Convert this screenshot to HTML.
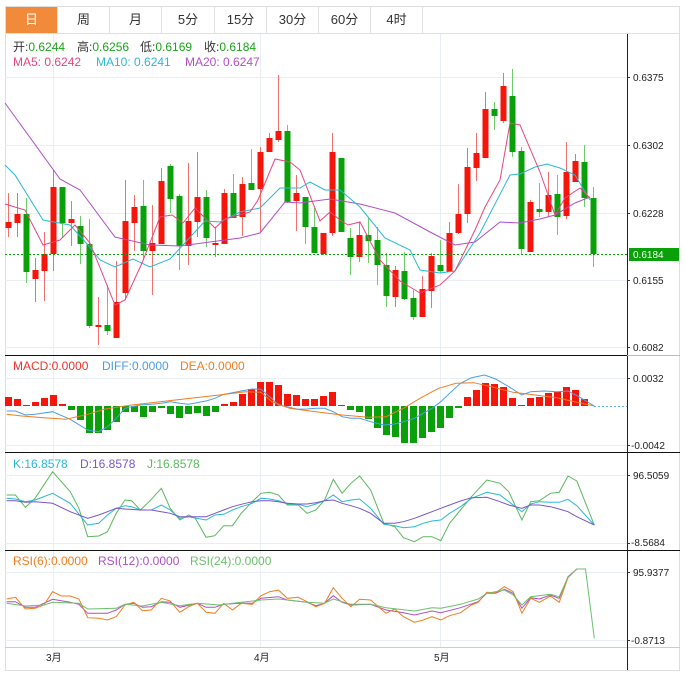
<!DOCTYPE html>
<html><head><meta charset="utf-8"><style>
body{margin:0;background:#fff;width:685px;height:680px;overflow:hidden;font-family:"Liberation Sans","Noto Sans CJK SC",sans-serif}
svg{position:absolute;left:0;top:0}
.tab{position:absolute;top:7px;height:26px;line-height:26px;text-align:center;font-size:13px;color:#333;border-right:1px solid #e0e0e0}
</style></head><body>
<svg id="s" width="685" height="680" xmlns="http://www.w3.org/2000/svg" font-family="Liberation Sans, Noto Sans CJK SC, sans-serif">
<rect x="5.5" y="6.5" width="674" height="664" fill="none" stroke="#dedede"/>
<line x1="5" y1="33.5" x2="680" y2="33.5" stroke="#e0e0e0"/>
<g id="grid" stroke="#e8eef3" stroke-width="1"></g>
<g id="draw"></g>
<line x1="5" y1="355.5" x2="627" y2="355.5" stroke="#111"/>
<line x1="5" y1="452.5" x2="680" y2="452.5" stroke="#111"/>
<line x1="5" y1="550.5" x2="680" y2="550.5" stroke="#111"/>
<line x1="5" y1="647.5" x2="680" y2="647.5" stroke="#ccc"/>
<line x1="627.5" y1="34" x2="627.5" y2="670" stroke="#222"/>
<line x1="627" y1="355.5" x2="680" y2="355.5" stroke="#bbb"/>
<g font-size="12">
<text y="51" fill="#333"><tspan x="13">开:</tspan><tspan fill="#1aa31a">0.6244</tspan><tspan x="77">高:</tspan><tspan fill="#1aa31a">0.6256</tspan><tspan x="140">低:</tspan><tspan fill="#1aa31a">0.6169</tspan><tspan x="204">收:</tspan><tspan fill="#1aa31a">0.6184</tspan></text>
<text y="66"><tspan x="13" fill="#e8467c">MA5: 0.6242</tspan><tspan x="96" fill="#2bb8d6">MA10: 0.6241</tspan><tspan x="185" fill="#b04fc8">MA20: 0.6247</tspan></text>
<text y="370"><tspan x="13" fill="#f0322a">MACD:0.0000</tspan><tspan x="102" fill="#4a9ee8">DIFF:0.0000</tspan><tspan x="180" fill="#f07d20">DEA:0.0000</tspan></text>
<text y="468"><tspan x="13" fill="#2bb8d6">K:16.8578</tspan><tspan x="80" fill="#7b55c8">D:16.8578</tspan><tspan x="147" fill="#5cb85c">J:16.8578</tspan></text>
<text y="565"><tspan x="13" fill="#f07d20">RSI(6):0.0000</tspan><tspan x="98" fill="#b04fc8">RSI(12):0.0000</tspan><tspan x="190" fill="#6cc06c">RSI(24):0.0000</tspan></text>
</g>
<rect x="629" y="248" width="50" height="13" fill="#0aa00a"/>
<g font-size="10" fill="#222">
<text x="633" y="81">0.6375</text>
<text x="633" y="149">0.6302</text>
<text x="633" y="217">0.6228</text>
<text x="633" y="258" fill="#fff">0.6184</text>
<text x="633" y="284">0.6155</text>
<text x="633" y="351">0.6082</text>
<text x="633" y="382">0.0032</text>
<text x="631" y="449">-0.0042</text>
<text x="633" y="479">96.5059</text>
<text x="631" y="546">-8.5684</text>
<text x="633" y="576">95.9377</text>
<text x="631" y="644">-0.8713</text>
<text x="46" y="661">3月</text>
<text x="254" y="661">4月</text>
<text x="434" y="661">5月</text>
</g>
<g stroke="#333"><line x1="627" x2="630" y1="77.5" y2="77.5"/><line x1="627" x2="630" y1="145.5" y2="145.5"/><line x1="627" x2="630" y1="213.5" y2="213.5"/><line x1="627" x2="630" y1="280.5" y2="280.5"/><line x1="627" x2="630" y1="347.5" y2="347.5"/><line x1="627" x2="630" y1="378.5" y2="378.5"/><line x1="627" x2="630" y1="445.5" y2="445.5"/><line x1="627" x2="630" y1="475.5" y2="475.5"/><line x1="627" x2="630" y1="543.5" y2="543.5"/><line x1="627" x2="630" y1="572.5" y2="572.5"/><line x1="627" x2="630" y1="640.5" y2="640.5"/></g>
</svg>
<div class="tab" style="left:6px;width:51px;background:#f28a3c;color:#fff">日</div>
<div class="tab" style="left:58px;width:51px">周</div>
<div class="tab" style="left:110px;width:51px">月</div>
<div class="tab" style="left:162px;width:52px">5分</div>
<div class="tab" style="left:215px;width:51px">15分</div>
<div class="tab" style="left:267px;width:51px">30分</div>
<div class="tab" style="left:319px;width:51px">60分</div>
<div class="tab" style="left:371px;width:51px">4时</div>
<script>
var NS="http://www.w3.org/2000/svg",g=document.getElementById('draw'),gr=document.getElementById('grid');
function el(p,t,a){var e=document.createElementNS(NS,t);for(var k in a)e.setAttribute(k,a[k]);p.appendChild(e);return e;}
[77,145,213,280,347].forEach(function(y){el(gr,'line',{x1:5,x2:627,y1:y+.5,y2:y+.5});});
[378,445].forEach(function(y){el(gr,'line',{x1:5,x2:627,y1:y+.5,y2:y+.5});});
[475,543,572,640].forEach(function(y){el(gr,'line',{x1:5,x2:627,y1:y+.5,y2:y+.5});});
[53,260,440].forEach(function(x){el(gr,'line',{x1:x+.5,x2:x+.5,y1:34,y2:647});});
var R="#f5150a",G="#0aa00a";
var C=[[222,228,193,237,1],[214,223,193,237,1],[214,272,198,283,0],[270,279,258,302,1],[254,271,232,301,1],[187,254,170,271,1],[187,223,187,237,0],[219,223,201,246,1],[226,244,216,264,0],[244,326,219,328,0],[325,326,297,345,1],[325,331,285,335,0],[302,338,261,338,1],[221,293,180,300,1],[207,223,195,251,1],[206,251,180,260,0],[243,251,205,295,1],[181,244,168,244,1],[166,199,164,213,0],[196,246,194,270,0],[221,246,163,265,1],[197,222,152,237,1],[197,238,190,247,0],[243,244,227,257,1],[193,244,189,244,1],[193,218,174,218,0],[184,217,177,236,1],[183,190,149,190,0],[152,189,147,232,1],[138,152,133,152,1],[131,140,75,142,1],[131,202,125,203,0],[193,201,175,231,1],[197,227,197,244,0],[227,253,208,253,0],[233,254,233,255,1],[152,233,133,236,1],[158,232,158,232,0],[238,257,228,275,0],[235,257,222,262,1],[235,241,217,263,0],[240,265,227,285,0],[265,296,253,307,0],[270,297,266,307,1],[271,299,252,300,0],[298,317,290,320,0],[289,317,276,317,1],[256,291,253,308,1],[265,271,240,273,0],[233,272,222,272,1],[214,233,184,234,1],[167,214,148,223,1],[153,168,133,181,1],[109,158,92,158,1],[109,116,102,130,0],[86,121,73,123,1],[96,152,69,157,0],[151,249,147,255,0],[202,252,200,252,1],[209,212,183,217,0],[195,212,172,217,1],[194,217,175,235,0],[172,216,142,219,1],[161,182,154,182,1],[162,198,145,207,0],[198,254,187,267,0]];
C.forEach(function(c,i){var x=8+i*9,col=c[4]?R:G;var w=c[4]?"#f07070":"#6ccc6c";
el(g,'line',{x1:x+.5,x2:x+.5,y1:c[2],y2:c[3],stroke:w});
var t=Math.min(c[0],c[1]),h=Math.max(2,Math.abs(c[1]-c[0]));el(g,'rect',{x:x-2.5,y:t,width:6,height:h,fill:col});});
el(g,'line',{x1:5,x2:627,y1:254.5,y2:254.5,stroke:"#0aa00a","stroke-dasharray":"2,2"});
function pl(pts,col,sx,sy,ox,oy){var s=pts.map(function(p){return (p[0]/sx+ox).toFixed(1)+","+(p[1]/sy+oy).toFixed(1)}).join(" ");el(g,'polyline',{points:s,fill:"none",stroke:col,"stroke-width":1});}
pl([[5,103],[60,179],[80,190],[115,237],[150,245],[180,246],[240,238],[260,233],[285,202],[300,203],[330,199],[360,204],[395,213],[430,232],[455,245],[475,242],[500,222],[520,223],[540,219],[555,215],[575,203],[590,197]],"#b04fc8",1,1,0,0);
pl([[5,165],[15,175],[43,220],[70,225],[88,245],[100,260],[115,267],[133,259],[150,267],[170,259],[183,245],[205,221],[220,222],[240,212],[260,208],[280,188],[300,188],[310,182],[325,190],[340,190],[360,207],[385,238],[410,250],[420,270],[440,273],[455,271],[480,233],[510,175],[520,174],[535,167],[547,164],[560,168],[575,175],[590,200]],"#2bb8d6",1,1,0,0);
pl([[5,204],[25,210],[43,245],[60,240],[75,225],[90,243],[115,305],[125,300],[142,263],[160,217],[172,215],[183,223],[195,208],[215,228],[225,219],[250,212],[258,200],[275,159],[290,162],[300,170],[320,221],[330,212],[340,220],[348,225],[360,222],[380,260],[400,281],[410,287],[420,293],[440,285],[455,271],[475,230],[485,207],[500,180],[510,123],[520,125],[540,172],[555,215],[565,198],[580,188],[590,198]],"#e8467c",1,1,0,0);
var M=[397,399,405,402,398,395,404,410,420,433,433,430,422,412,412,417,412,408,414,418,414,413,416,412,404,402,394,389,382,382,385,394,395,399,399,396,392,405,410,412,419,428,435,437,443,443,438,432,428,418,408,397,390,383,384,387,398,405,398,397,393,392,387,390,399];
M.forEach(function(y,i){var x=8+i*9,z=406;var up=y<z;el(g,'rect',{x:x-3,y:Math.min(y,z),width:7,height:Math.max(1,Math.abs(y-z)),fill:up?R:G});});
var sx=2.28;
pl([[15,168],[35,168],[58,180],[80,178],[120,170],[160,193],[200,225],[225,230],[245,215],[265,190],[285,160],[300,155],[320,150],[345,148],[368,145],[388,140],[410,145],[430,148],[470,138],[490,130],[510,118],[530,113],[550,108],[575,102],[595,103],[615,125],[635,150],[655,155],[680,163],[700,162],[720,160],[740,160],[760,170],[780,185],[800,190],[820,190],[845,200],[875,210],[900,207],[920,200],[945,190],[965,175],[985,160],[1005,140],[1025,115],[1050,85],[1075,68],[1105,60],[1130,72],[1160,95],[1190,120],[1210,110],[1240,108],[1270,110],[1295,108],[1320,125],[1355,153]],"#4a9ee8",sx,3,0,355);
pl([[15,178],[50,183],[100,188],[150,193],[200,178],[240,162],[300,150],[400,135],[500,120],[560,110],[595,112],[620,140],[660,160],[720,170],[780,180],[840,187],[880,185],[920,160],[960,128],[1000,100],[1040,85],[1080,83],[1120,95],[1170,112],[1220,120],[1270,128],[1310,140],[1355,153]],"#f07d20",sx,3,0,355);
el(g,'line',{x1:594,x2:627,y1:406.5,y2:406.5,stroke:"#6ab8e0","stroke-dasharray":"2,2"});
pl([[15,420],[35,420],[58,457],[80,430],[120,350],[160,410],[180,460],[200,545],[225,543],[245,530],[265,475],[285,435],[300,437],[320,465],[340,440],[368,400],[388,460],[410,495],[430,480],[445,490],[470,547],[490,542],[510,512],[530,512],[550,475],[575,440],[595,415],[615,412],[635,420],[655,450],[680,450],[700,475],[720,465],[740,435],[760,373],[780,415],[800,385],[820,363],[845,405],[875,505],[900,515],[920,548],[945,560],[965,545],[985,545],[1005,557],[1025,505],[1050,465],[1075,425],[1110,375],[1140,385],[1160,410],[1190,495],[1210,440],[1230,437],[1255,415],[1275,412],[1295,363],[1315,378],[1355,510]],"#5cb85c",sx,3,0,355);
pl([[15,430],[35,432],[58,440],[80,435],[120,415],[160,445],[200,510],[225,505],[245,480],[265,460],[285,452],[300,455],[320,465],[345,465],[368,450],[388,465],[410,490],[430,485],[470,495],[490,480],[510,478],[530,465],[550,455],[575,445],[595,430],[615,432],[635,437],[655,447],[680,448],[700,455],[720,447],[740,437],[760,420],[780,440],[800,435],[820,432],[845,460],[875,508],[900,512],[920,518],[945,515],[965,505],[985,498],[1005,495],[1025,475],[1050,455],[1075,430],[1110,412],[1140,420],[1160,440],[1190,470],[1210,447],[1230,440],[1255,442],[1275,442],[1295,433],[1315,452],[1355,510]],"#2bb8d6",sx,3,0,355);
pl([[15,437],[35,437],[58,442],[80,440],[120,445],[160,470],[200,490],[225,480],[245,470],[265,460],[285,462],[320,465],[345,465],[368,470],[388,475],[410,485],[430,485],[470,485],[490,475],[510,465],[530,455],[550,448],[575,440],[595,437],[615,437],[635,440],[655,445],[680,447],[700,447],[720,443],[740,437],[760,435],[780,445],[800,452],[820,460],[845,475],[875,505],[900,505],[920,500],[945,490],[965,480],[985,470],[1005,460],[1025,450],[1050,438],[1075,428],[1110,427],[1140,440],[1160,450],[1190,460],[1210,450],[1230,450],[1255,455],[1275,462],[1295,470],[1315,485],[1355,510]],"#7b55c8",sx,3,0,355);
pl([[15,170],[35,170],[58,187],[80,187],[120,163],[160,172],[180,178],[200,205],[245,205],[265,195],[285,178],[305,175],[325,187],[345,185],[368,170],[388,172],[410,187],[450,175],[470,187],[490,187],[510,178],[550,175],[575,175],[595,160],[635,155],[655,165],[700,172],[720,182],[740,175],[760,152],[780,172],[800,180],[845,178],[880,195],[920,203],[945,210],[985,198],[1005,203],[1050,188],[1090,170],[1110,145],[1130,145],[1150,133],[1170,145],[1190,190],[1210,158],[1230,162],[1255,150],[1275,160],[1295,95],[1315,72],[1335,72]],"#b04fc8",sx,3,0,545);
pl([[15,162],[35,157],[58,192],[80,190],[100,180],[120,140],[140,153],[160,153],[180,162],[200,218],[225,220],[245,225],[265,215],[285,180],[305,172],[325,197],[345,195],[368,160],[388,168],[410,202],[430,185],[450,175],[470,202],[490,205],[510,175],[530,195],[550,175],[575,178],[595,152],[615,140],[635,135],[655,160],[680,157],[700,170],[720,185],[740,175],[760,128],[780,160],[800,185],[820,163],[845,165],[880,205],[900,192],[920,215],[945,232],[965,225],[985,215],[1005,225],[1025,212],[1050,203],[1075,180],[1090,172],[1110,142],[1130,143],[1150,125],[1170,140],[1190,205],[1210,160],[1230,172],[1255,153],[1275,172],[1295,98],[1315,72],[1335,72]],"#f07d20",sx,3,0,545);
pl([[15,175],[58,183],[100,180],[120,172],[180,175],[200,192],[265,190],[285,178],[325,183],[368,172],[410,182],[450,175],[500,180],[550,172],[595,165],[635,162],[700,172],[740,175],[760,162],[800,178],[845,178],[880,188],[945,198],[985,188],[1005,190],[1050,178],[1090,162],[1110,145],[1150,135],[1170,150],[1190,180],[1210,155],[1255,148],[1275,155],[1295,97],[1315,72],[1335,72],[1355,280]],"#6cc06c",sx,3,0,545);
</script>
</body></html>
